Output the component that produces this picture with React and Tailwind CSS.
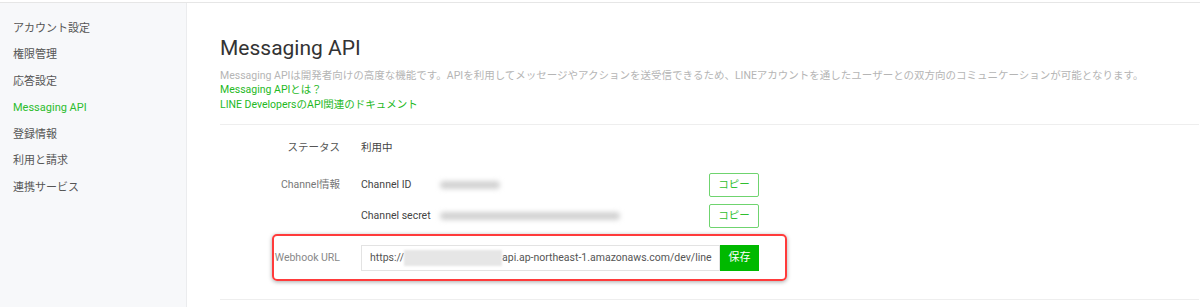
const NAV = [
  { label: 'アカウント設定' },
  { label: '権限管理' },
  { label: '応答設定' },
  { label: 'Messaging API', active: true },
  { label: '登録情報' },
  { label: '利用と請求' },
  { label: '連携サービス' },
]

const font = { fontFamily: 'Roboto, "Noto Sans CJK JP", sans-serif' }

function CopyButton() {
  return (
    <button className="w-[50px] h-[24px] border-[1.5px] border-[#6fd46f] rounded-[2px] text-[10.5px] text-[#2fbf2f] flex items-center justify-center bg-white">
      コピー
    </button>
  )
}

function Blur({ w }) {
  return <div className="h-[8px] bg-[#d2d2d2] blur-[2.5px] rounded-full" style={{ width: w }} />
}

export default function App() {
  return (
    <div className="w-[1200px] h-[307px] bg-white flex flex-col overflow-hidden text-[#555]" style={font}>
      <div className="h-[2px] bg-white" />
      <div className="h-px bg-[#e6e6e6]" />
      <div className="flex flex-1">
        {/* Sidebar */}
        <aside className="w-[187px] bg-[#f7f8fa] border-r border-[#ebecee] pt-[12.5px]">
          {NAV.map(({ label, active }) => (
            <div
              key={label}
              className={`h-[26.5px] flex items-center pl-[13px] text-[11px] ${active ? 'text-[#2dbd2d]' : 'text-[#555]'}`}
            >
              {label}
            </div>
          ))}
        </aside>

        {/* Content */}
        <main className="flex-1 pl-[33px] pr-px pt-[32px]">
          <h1 className="text-[21px] leading-[26px] text-[#333]">Messaging API</h1>
          <div className="mt-[7.5px] text-[10.5px] leading-[14.5px]">
            <p className="text-[#b5b5b5] whitespace-nowrap">
              Messaging APIは開発者向けの高度な機能です。APIを利用してメッセージやアクションを送受信できるため、LINEアカウントを通したユーザーとの双方向のコミュニケーションが可能となります。
            </p>
            <p className="text-[#1fb91f]">Messaging APIとは？</p>
            <p className="text-[#1fb91f]">LINE DevelopersのAPI関連のドキュメント</p>
          </div>

          <div className="mt-[12px] h-px bg-[#eeeeee]" />

          <div className="mt-[11px] flex flex-col">
            {/* Status */}
            <div className="flex items-center h-[24px] text-[10.5px]">
              <div className="w-[120px] text-right text-[#555]">ステータス</div>
              <div className="ml-[21px] text-[#444]">利用中</div>
            </div>

            {/* Channel */}
            <div className="flex mt-[13px] text-[10.5px]">
              <div className="w-[120px] text-right text-[#777] h-[24px] flex items-center justify-end">Channel情報</div>
              <div className="ml-[21px] w-[398px] flex flex-col gap-[6px]">
                <div className="flex items-center h-[24px]">
                  <div className="w-[79px] text-[#444]">Channel ID</div>
                  <div className="flex-1"><Blur w={60} /></div>
                  <CopyButton />
                </div>
                <div className="flex items-center h-[25px]">
                  <div className="w-[79px] text-[#444]">Channel secret</div>
                  <div className="flex-1"><Blur w={180} /></div>
                  <CopyButton />
                </div>
              </div>
            </div>

            {/* Webhook */}
            <div className="relative flex items-center mt-[17px] h-[26px] text-[10.5px]">
              <div className="w-[120px] text-right text-[#888]">Webhook URL</div>
              <div className="ml-[21px] flex h-[26px]">
                <div className="w-[359px] border border-[#e3e3e3] flex items-center pl-[8px] text-[10.5px] text-[#555] whitespace-nowrap">
                  <span>https://</span>
                  <span className="inline-block w-[98px] h-[16px] bg-[#e6e6e6] blur-[1px]" />
                  <span>api.ap-northeast-1.amazonaws.com/dev/line</span>
                </div>
                <button className="w-[39px] bg-[#00b900] text-white text-[11px] flex items-center justify-center">保存</button>
              </div>
              <div className="absolute left-[52px] top-[-11px] w-[515px] h-[47px] border-2 border-[#ff3b3b] rounded-[5px] shadow-[0_1px_4px_rgba(0,0,0,0.35)] pointer-events-none" />
            </div>

            <div className="mt-[28px] h-px bg-[#eeeeee]" />
          </div>
        </main>
      </div>
    </div>
  )
}
